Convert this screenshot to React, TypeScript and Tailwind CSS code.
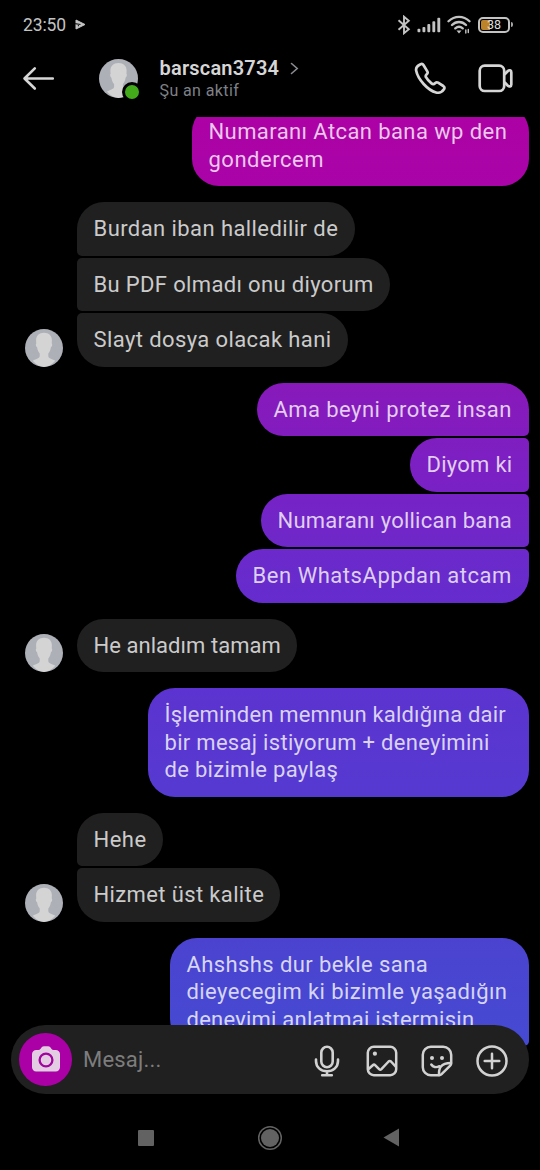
import React from "react";

type Line = { text: string; tracking: string };

type Message = {
  lines: Line[];
  width: string;
  shape: string;
  color?: string;
};

type Group = {
  mine: boolean;
  messages: Message[];
};

const groups: Group[] = [
  {
    mine: true,
    messages: [
      {
        lines: [
          { text: "Numaranı Atcan bana wp den", tracking: "tracking-[0.41px]" },
          { text: "gondercem", tracking: "tracking-[0.52px]" },
        ],
        width: "w-[337px]",
        shape: "rounded-[27px]",
        color: "from-[#ad01a4] to-[#a904a8]",
      },
    ],
  },
  {
    mine: false,
    messages: [
      {
        lines: [{ text: "Burdan iban halledilir de", tracking: "tracking-[0.42px]" }],
        width: "w-[278px]",
        shape: "rounded-[27px] rounded-bl-[5px]",
      },
      {
        lines: [{ text: "Bu PDF olmadı onu diyorum", tracking: "tracking-[0.35px]" }],
        width: "w-[313px]",
        shape: "rounded-[27px] rounded-l-[5px]",
      },
      {
        lines: [{ text: "Slayt dosya olacak hani", tracking: "tracking-[0.4px]" }],
        width: "w-[271px]",
        shape: "rounded-[27px] rounded-tl-[5px]",
      },
    ],
  },
  {
    mine: true,
    messages: [
      {
        lines: [{ text: "Ama beyni protez insan", tracking: "tracking-[0.44px]" }],
        width: "w-[272px]",
        shape: "rounded-[27px] rounded-br-[5px]",
        color: "from-[#8819ba] to-[#821cbf]",
      },
      {
        lines: [{ text: "Diyom ki", tracking: "tracking-[0.26px]" }],
        width: "w-[119px]",
        shape: "rounded-[27px] rounded-r-[5px]",
        color: "from-[#7f1ec1] to-[#7921c5]",
      },
      {
        lines: [{ text: "Numaranı yollican bana", tracking: "tracking-[0.23px]" }],
        width: "w-[268px]",
        shape: "rounded-[27px] rounded-r-[5px]",
        color: "from-[#7622c6] to-[#6e28c9]",
      },
      {
        lines: [{ text: "Ben WhatsAppdan atcam", tracking: "tracking-[0.54px]" }],
        width: "w-[293px]",
        shape: "rounded-[27px] rounded-tr-[5px]",
        color: "from-[#6c29cb] to-[#652ccd]",
      },
    ],
  },
  {
    mine: false,
    messages: [
      {
        lines: [{ text: "He anladım tamam", tracking: "tracking-[0.05px]" }],
        width: "w-[220px]",
        shape: "rounded-[27px]",
      },
    ],
  },
  {
    mine: true,
    messages: [
      {
        lines: [
          { text: "İşleminden memnun kaldığına dair", tracking: "tracking-[0.17px]" },
          { text: "bir mesaj istiyorum + deneyimini", tracking: "tracking-[0.3px]" },
          { text: "de bizimle paylaş", tracking: "tracking-[0.3px]" },
        ],
        width: "w-[381px]",
        shape: "rounded-[27px]",
        color: "from-[#5c33d0] to-[#553ad0]",
      },
    ],
  },
  {
    mine: false,
    messages: [
      {
        lines: [{ text: "Hehe", tracking: "tracking-[0.5px]" }],
        width: "w-[86px]",
        shape: "rounded-[27px] rounded-bl-[5px]",
      },
      {
        lines: [{ text: "Hizmet üst kalite", tracking: "tracking-[0.37px]" }],
        width: "w-[203px]",
        shape: "rounded-[27px] rounded-tl-[5px]",
      },
    ],
  },
  {
    mine: true,
    messages: [
      {
        lines: [
          { text: "Ahshshs dur bekle sana", tracking: "tracking-[0.4px]" },
          { text: "dieyecegim ki bizimle yaşadığın", tracking: "tracking-[0.42px]" },
          { text: "deneyimi anlatmai istermisin", tracking: "tracking-[0.25px]" },
        ],
        width: "w-[359px]",
        shape: "rounded-[27px] rounded-br-[5px]",
        color: "from-[#4b43d0] to-[#454ad2]",
      },
    ],
  },
];

function Avatar({ className }: { className: string }) {
  return (
    <svg className={`shrink-0 rounded-full ${className}`} viewBox="0 0 38 38">
      <rect width="38" height="38" fill="#adb0b6" />
      <path
        d="M19 3.800c-5 0-7.900 3-7.900 7.600 0 1.200.1 2.300.2 3-.8.300-.6 2.900.8 3.900.4 2.900 1.400 4.800 2.600 6.100v2.600c0 2.300-3.200 2.700-7 4.700C11 35.500 15 38 19 38s8-2.500 11.300-6.300c-3.800-2-7-2.400-7-4.700v-2.600c1.200-1.300 2.200-3.200 2.600-6.100 1.400-1 1.600-3.600.8-3.900.1-.7.2-1.800.2-3 0-4.600-2.900-7.600-7.900-7.600z"
        fill="#d4d4d5"
      />
    </svg>
  );
}

function StatusBar() {
  return (
    <div className="flex h-[48px] shrink-0 items-center pl-[23px] pr-[27px] text-[#c3c3c3]">
      <span className="pt-[2px] text-[17.5px] leading-5 tracking-[-0.1px]">23:50</span>
      <svg className="ml-[9px] h-[11px] w-[11px]" viewBox="0 0 11 11">
        <path d="M1 1l9 4.500L1 10z" fill="currentColor" stroke="currentColor" strokeLinejoin="round" />
        <path d="M0 4.600l5.500.9M3.400 6v1.300" fill="none" stroke="#1a1a1a" strokeWidth="1.100" />
      </svg>
      <div className="ml-auto flex items-center pt-[1px]">
        <svg className="h-5 w-[14px]" viewBox="0 0 14 20" fill="none" stroke="currentColor" strokeWidth="1.9">
          <path d="M1.500 5.200l10.300 9L7 18.200V1.700l4.800 4-10.300 9" />
        </svg>
        <svg className="ml-[6px] h-[16px] w-[24px]" viewBox="0 0 25 16" fill="currentColor">
          <rect x="0.500" y="12" width="3" height="3.500" rx="1" />
          <rect x="5.700" y="10" width="3" height="5.500" rx="1" />
          <rect x="10.800" y="7" width="3" height="8.500" rx="1" />
          <rect x="16" y="4" width="3" height="11.500" rx="1" />
          <rect x="21.200" y="0.500" width="3" height="15" rx="1" />
        </svg>
        <svg className="ml-[6px] h-[19px] w-[24px]" viewBox="0 0 24 19" fill="none" stroke="currentColor" strokeWidth="2.300" strokeLinecap="round">
          <path d="M1.500 6.300C7.600.3 16.400.3 22.500 6.300M5 10c4-4 10-4 14 0M8.300 13.400c2.200-2 5.200-2 7.400 0" />
          <path d="M9.500 15.600h5L12 18.500z" fill="currentColor" stroke="none" />
          <path d="M18.800 18v-3M21.300 14.500v3" strokeWidth="1.400" />
        </svg>
        <div className="ml-[7px] flex items-center">
          <div className="flex h-[16px] w-[32px] items-center rounded-[5px] border-2 border-[#c3c3c3] p-px">
            <div className="flex h-full w-full items-center justify-center rounded-[2px] bg-[linear-gradient(90deg,#bd8329_36%,transparent_36%)]">
              <span className="text-[12.5px] leading-[10px] text-[#dddddd]">38</span>
            </div>
          </div>
          <div className="ml-px h-[5px] w-[2px] rounded-r bg-[#a5a5a5]" />
        </div>
      </div>
    </div>
  );
}

function ChatHeader() {
  return (
    <header className="flex h-[69px] shrink-0 items-start pl-[22px] pr-[26px] text-[#d6d6d6]">
      <svg className="mt-[18px] h-[25px] w-[33px]" viewBox="0 0 33 25" fill="none" stroke="currentColor" strokeWidth="2.600" strokeLinecap="round" strokeLinejoin="round">
        <path d="M2.500 12.500h28.300M12.800 2.400L2.500 12.500l10.300 10" />
      </svg>
      <div className="relative ml-[44px] mt-[11px] h-[39px] w-[39px]">
        <Avatar className="h-[39px] w-[39px]" />
        <span className="absolute -right-[4px] -bottom-[4px] h-[20px] w-[20px] rounded-full border-[3px] border-black bg-[#43ab1b]" />
      </div>
      <div className="ml-[21.5px] mt-[8px]">
        <div className="flex items-center">
          <span className="text-[20px] font-semibold leading-[24px] tracking-[0.2px]">barscan3734</span>
          <svg className="ml-[11px] h-[13px] w-[9px]" viewBox="0 0 9 13" fill="none" stroke="#8a8b90" strokeWidth="1.600" strokeLinecap="round">
            <path d="M1.500 1.500l5.700 5-5.700 5" />
          </svg>
        </div>
        <p className="text-[16px] leading-[22px] tracking-[0.4px] text-[#7f8087]">Şu an aktif</p>
      </div>
      <svg className="ml-auto mt-[14px] h-[32px] w-[32px]" viewBox="0 0 32 32" fill="none" stroke="currentColor" strokeWidth="2.700" strokeLinejoin="round">
        <path d="M6.600 2.200C3.700 3.500 1.600 5.800 2.200 8.800c1.700 8.500 11.500 19.500 19.900 21.700 3.300.9 6.600-1.100 8-3.500.6-1.100.3-2.200-.8-3l-5.200-3.300c-1-.6-2-.4-2.800.3-1.200 1.200-2.200 1.700-3.800.4-2.400-1.900-4.200-3.800-5.500-6.200-.7-1.200-.3-2 .7-2.900 1-.9 1.200-1.900.6-2.900L9.600 3.200c-.7-1.100-1.800-1.500-3-1z" />
      </svg>
      <svg className="ml-[32px] mr-[1px] mt-[16px] h-[29px] w-[35px]" viewBox="0 0 35 29" fill="none" stroke="currentColor" strokeWidth="2.700" strokeLinejoin="round">
        <rect x="1.700" y="1.700" width="24.500" height="25.300" rx="5" />
        <path d="M26.500 10.500l3.400-3.500c1.300-1.200 3.400-1 3.400 1.200v12.300c0 2.200-2.100 2.400-3.400 1.200l-3.400-3.500" />
      </svg>
    </header>
  );
}

function Bubble({ message, mine }: { message: Message; mine: boolean }) {
  return (
    <div
      className={`px-[16.500px] py-[13px] text-[22px] leading-[27.500px] whitespace-nowrap ${message.width} ${message.shape} ${
        mine ? `bg-linear-to-b text-white/78 ${message.color}` : "bg-[#202020] text-[#cbcbcb]"
      }`}
    >
      {message.lines.map((line) => (
        <p key={line.text} className={line.tracking}>
          {line.text}
        </p>
      ))}
    </div>
  );
}

function Composer() {
  return (
    <div className="relative z-10 mx-[11px] -mt-[24px] flex h-[69px] shrink-0 items-center rounded-full bg-[#202020] pl-[8px] pr-[21px] text-[#d2d2d2]">
      <div className="flex h-[53px] w-[53px] items-center justify-center rounded-full bg-[#ab00a6]">
        <svg className="mb-[2px] h-[26px] w-[28px]" viewBox="0 0 28 26">
          <path
            d="M9.700 1.300C10.300.6 11 .3 12 .3h4c1 0 1.700.3 2.300 1l1.300 1.700c.5.600 1.100.900 1.900.900h2.300A4.200 4.200 0 0 1 28 8.100v13.200a4.200 4.200 0 0 1-4.200 4.200H4.200A4.200 4.200 0 0 1 0 21.300V8.100a4.200 4.200 0 0 1 4.200-4.200h2.300c.8 0 1.400-.3 1.900-.9z"
            fill="#e3cde3"
          />
          <circle cx="14" cy="14" r="6.400" fill="none" stroke="#a1059d" strokeWidth="2.300" />
        </svg>
      </div>
      <span className="ml-[11px] text-[22px] leading-7 tracking-[0.2px] text-[#7d7d7d]">Mesaj...</span>
      <div className="ml-auto flex items-center gap-[23px] pt-[2px]">
        <svg className="mr-[3px] h-[32px] w-[26px]" viewBox="0 0 26 32" fill="none" stroke="currentColor" strokeWidth="2.600" strokeLinecap="round">
          <rect x="7.300" y="1.800" width="11.400" height="20.400" rx="5.700" />
          <path d="M2 14.500v1.500c0 6 4.600 10.300 11 10.300S24 22 24 16v-1.500M13 26.500v3.800M8.200 30.200h9.600" />
        </svg>
        <svg className="h-[32px] w-[32px]" viewBox="0 0 32 32" fill="none" stroke="currentColor" strokeWidth="2.500" strokeLinejoin="round">
          <rect x="1.800" y="1.800" width="28.400" height="28.400" rx="6" />
          <circle cx="8.900" cy="8.700" r="2.100" fill="currentColor" stroke="none" />
          <path d="M2 24.500l4.800-4.300c.8-.7 1.600-.7 2.300 0l4 4c.8.800 1.500.8 2.300 0l7.200-7.700c.8-.8 1.600-.8 2.400 0l5 5.300" />
        </svg>
        <svg className="h-[32px] w-[32px]" viewBox="0 0 32 32" fill="none" stroke="currentColor" strokeWidth="2.500" strokeLinecap="round" strokeLinejoin="round">
          <path d="M18.300 30.200H9.800a8 8 0 0 1-8-8V9.800a8 8 0 0 1 8-8h12.400a8 8 0 0 1 8 8v8.500c0 1-.3 1.700-1 2.400l-8.600 8.500c-.7.700-1.400 1-2.300 1z" />
          <path d="M18 30c-.3-7 1.500-11.800 12-12M10.300 19.500c1.600 2.600 5 3.300 8.200 1.700" />
          <circle cx="11" cy="13" r="2" fill="currentColor" stroke="none" />
          <circle cx="21" cy="13" r="2" fill="currentColor" stroke="none" />
        </svg>
        <svg className="h-[32px] w-[32px]" viewBox="0 0 32 32" fill="none" stroke="currentColor" strokeWidth="2.500" strokeLinecap="round">
          <circle cx="16" cy="16" r="14.500" />
          <path d="M16 8.700v14.600M8.700 16h14.600" />
        </svg>
      </div>
    </div>
  );
}

function NavBar() {
  return (
    <div className="flex h-[76px] shrink-0 items-center pt-[11px] pl-[138px] pr-[140px] text-[#626262]">
      <div className="h-[16px] w-[16px] rounded-[1px] bg-current" />
      <svg className="ml-[103px] h-[26px] w-[26px]" viewBox="0 0 26 26">
        <circle cx="13" cy="13" r="11.300" fill="none" stroke="currentColor" strokeWidth="1.500" />
        <circle cx="13" cy="13" r="9" fill="currentColor" />
      </svg>
      <svg className="ml-auto h-[19px] w-[17px]" viewBox="0 0 17 19" fill="currentColor">
        <path d="M16 .5v18L0.500 9.500z" />
      </svg>
    </div>
  );
}

export default function App() {
  return (
    <div className="flex h-[1170px] w-[540px] flex-col overflow-hidden bg-black font-[Roboto,sans-serif]">
      <StatusBar />
      <ChatHeader />
      <main className="h-[932px] shrink-0 overflow-hidden pl-[25px] pr-[11px]">
        <div className="-mt-[12px] flex flex-col gap-4">
          {groups.map((group, i) => (
            <div key={i} className={`flex items-end ${group.mine ? "justify-end" : ""}`}>
              {!group.mine && <Avatar className="mr-[14px] h-[38px] w-[38px]" />}
              <div className={`flex flex-col gap-[2px] ${group.mine ? "items-end" : "items-start"}`}>
                {group.messages.map((message) => (
                  <Bubble key={message.lines[0].text} message={message} mine={group.mine} />
                ))}
              </div>
            </div>
          ))}
        </div>
      </main>
      <Composer />
      <NavBar />
    </div>
  );
}
